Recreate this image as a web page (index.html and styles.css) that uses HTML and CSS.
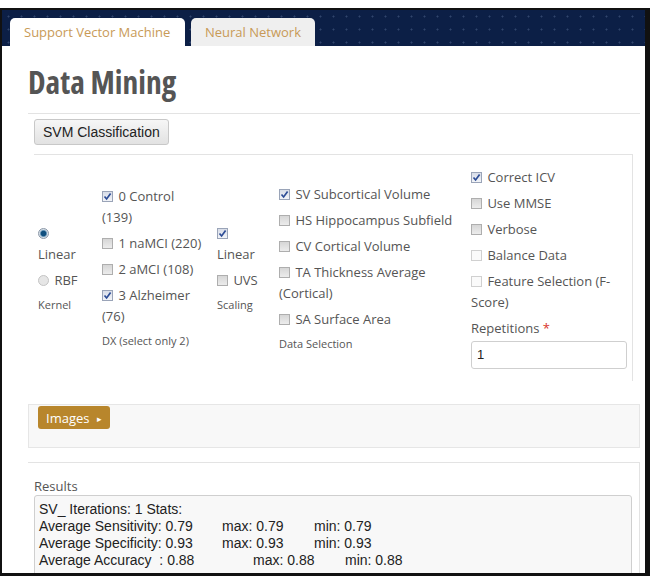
FILE: index.html
```html
<!DOCTYPE html>
<html lang="en">
<head>
    <meta charset="UTF-8">
    <title>Data Mining</title>
    <link rel="stylesheet" href="styles.css">
</head>
<body>
    <div class="frame">
        <div class="topbar">
            <div class="tab active">Support Vector Machine</div>
            <div class="tab">Neural Network</div>
        </div>

        <div class="content">
            <h1 class="title">Data Mining</h1>

            <div class="section">
                <button class="btn">SVM Classification</button>

                <div class="form-panel">
                    <div class="col col-kernel">
                        <div class="opt"><span class="radio on"></span> Linear</div>
                        <div class="opt"><span class="radio"></span> RBF</div>
                        <div class="caption">Kernel</div>
                    </div>

                    <div class="col col-dx">
                        <div class="opt"><span class="cb checked"><svg viewBox="0 0 11 11"><path d="M2.5 5.5 L4.6 8 L8.6 2.6"/></svg></span> 0 Control (139)</div>
                        <div class="opt"><span class="cb"></span> 1 naMCI (220)</div>
                        <div class="opt"><span class="cb"></span> 2 aMCI (108)</div>
                        <div class="opt"><span class="cb checked"><svg viewBox="0 0 11 11"><path d="M2.5 5.5 L4.6 8 L8.6 2.6"/></svg></span> 3 Alzheimer (76)</div>
                        <div class="caption">DX (select only 2)</div>
                    </div>

                    <div class="col col-scaling">
                        <div class="opt"><span class="cb checked"><svg viewBox="0 0 11 11"><path d="M2.5 5.5 L4.6 8 L8.6 2.6"/></svg></span> Linear</div>
                        <div class="opt"><span class="cb"></span> UVS</div>
                        <div class="caption">Scaling</div>
                    </div>

                    <div class="col col-data">
                        <div class="opt"><span class="cb checked"><svg viewBox="0 0 11 11"><path d="M2.5 5.5 L4.6 8 L8.6 2.6"/></svg></span> SV Subcortical Volume</div>
                        <div class="opt"><span class="cb"></span> HS Hippocampus Subfield</div>
                        <div class="opt"><span class="cb"></span> CV Cortical Volume</div>
                        <div class="opt"><span class="cb"></span> TA Thickness Average (Cortical)</div>
                        <div class="opt"><span class="cb"></span> SA Surface Area</div>
                        <div class="caption">Data Selection</div>
                    </div>

                    <div class="col col-options">
                        <div class="opt"><span class="cb checked"><svg viewBox="0 0 11 11"><path d="M2.5 5.5 L4.6 8 L8.6 2.6"/></svg></span> Correct ICV</div>
                        <div class="opt"><span class="cb"></span> Use MMSE</div>
                        <div class="opt"><span class="cb"></span> Verbose</div>
                        <div class="opt"><span class="cb light"></span> Balance Data</div>
                        <div class="opt"><span class="cb light"></span> Feature Selection (F-Score)</div>
                        <label class="field-label">Repetitions <span class="req">*</span></label>
                        <div class="input">1</div>
                    </div>
                </div>
            </div>

            <div class="images-box">
                <button class="images-btn">Images <span class="caret">&#9656;</span></button>
            </div>

            <div class="results">
                <div class="results-label">Results</div>
                <div class="results-text">
                    <div>SV_ Iterations: 1 Stats:</div>
                    <div><span class="c1">Average Sensitivity: 0.79</span><span class="c2">max: 0.79</span>min: 0.79</div>
                    <div><span class="c1">Average Specificity: 0.93</span><span class="c2">max: 0.93</span>min: 0.93</div>
                    <div><span class="c1 wide">Average Accuracy &nbsp;: 0.88</span><span class="c2">max: 0.88</span>min: 0.88</div>
                </div>
            </div>
        </div>
    </div>
</body>
</html>
```

FILE: styles.css
```css
body {
    margin: 0;
    background: #fff;
    font-family: "Open Sans", Arial, sans-serif;
    font-size: 13px;
    color: #555;
}
.frame {
    margin-top: 8px;
    height: 568px;
    box-sizing: border-box;
    border-style: solid;
    border-color: #111;
    border-width: 2px 5px 3px 2px;
    overflow: hidden;
    background: #fff;
}
.topbar {
    height: 36px;
    background-color: #0c1f46;
    background-image: radial-gradient(rgba(120, 140, 180, 0.35) 0.8px, transparent 1.2px);
    background-size: 13px 13px;
    display: flex;
    align-items: flex-end;
    gap: 6px;
    padding-left: 8px;
}
.tab {
    height: 28px;
    line-height: 28px;
    padding: 0 14px;
    border-radius: 5px 5px 0 0;
    background: #efefef;
    color: #c89a57;
    font-size: 13px;
}
.tab.active {
    width: 175px;
    box-sizing: border-box;
    background: #fff;
}
.content {
    padding: 0 5px 0 26px;
}
.title {
    margin: 0;
    padding: 18px 0 13px;
    font-size: 31.5px;
    line-height: 36px;
    font-weight: bold;
    font-stretch: 85%;
    color: #555;
}
.section {
    border-top: 1px solid #e3e3e3;
    padding: 5px 7px 0 6px;
}
.btn {
    font-family: "Liberation Sans", Arial, sans-serif;
    font-size: 14px;
    color: #222;
    height: 26px;
    padding: 0 8px;
    border: 1px solid #c8c8c8;
    border-radius: 3px;
    background: linear-gradient(#f6f6f6, #e2e2e2);
}
.form-panel {
    margin-top: 9px;
    border-top: 1px solid #e3e3e3;
    border-right: 1px solid #e3e3e3;
    padding: 12px 0 12px 4px;
    display: grid;
    grid-template-columns: 64px 115px 62px 192px 156px;
    align-items: center;
}
.col .opt {
    line-height: 21px;
    margin-bottom: 5px;
}
.caption {
    font-size: 11px;
    line-height: 18px;
    color: #555;
}
.col-kernel {
    width: 50px;
}
.col-dx {
    width: 100px;
}
.col-scaling {
    width: 50px;
}
.col-data {
    width: 180px;
}
.cb, .radio {
    display: inline-block;
    width: 11px;
    height: 11px;
    box-sizing: border-box;
    vertical-align: -1px;
    margin-right: 2px;
}
.cb {
    border: 1px solid #aeaeae;
    background: linear-gradient(#d6d6d6, #ececec);
    position: relative;
}
.cb.checked {
    border-color: #9aa4b8;
    background: linear-gradient(#d8dde8, #f2f4f8);
}
.cb.light {
    border-color: #d0d0d0;
    background: #fafafa;
}
.cb svg {
    position: absolute;
    left: -1px;
    top: -1px;
    width: 11px;
    height: 11px;
    fill: none;
    stroke: #2c4c96;
    stroke-width: 1.7;
}
.radio {
    border-radius: 50%;
    border: 1px solid #c4c4c4;
    background: #e6e6e6;
}
.radio.on {
    border-color: #8b98a8;
    background: radial-gradient(circle, #0f4f7e 0 2.4px, #5d8fb2 3px, #d3dde6 4px);
}
.field-label {
    display: block;
    line-height: 21px;
    margin-top: 2px;
}
.req {
    color: #d9342b;
}
.input {
    margin-top: 2px;
    height: 28px;
    line-height: 26px;
    box-sizing: border-box;
    border: 1px solid #cfcfcf;
    border-radius: 3px;
    padding-left: 5px;
    font-family: "Liberation Sans", Arial, sans-serif;
    font-size: 13px;
    color: #222;
}
.images-box {
    margin-top: 23px;
    height: 44px;
    box-sizing: border-box;
    border: 1px solid #e6e6e6;
    background: #f8f8f8;
    padding: 1px 9px;
}
.images-btn {
    height: 23px;
    padding: 0 8px;
    border: none;
    border-radius: 3px;
    background: #b8862c;
    color: #fff;
    font-family: "Open Sans", Arial, sans-serif;
    font-size: 13px;
}
.caret {
    font-size: 9px;
    margin-left: 4px;
    vertical-align: 1px;
}
.results {
    margin-top: 14px;
    border-top: 1px solid #e3e3e3;
    border-right: 1px solid #e3e3e3;
    padding: 14px 7px 0 6px;
}
.results-label {
    line-height: 18px;
}
.results-text {
    border: 1px solid #cfcfcf;
    border-radius: 3px;
    background: #f8f8f8;
    padding: 5px 4px 10px;
    font-family: "Liberation Sans", Arial, sans-serif;
    font-size: 14px;
    line-height: 17px;
    color: #222;
}
.c1 {
    display: inline-block;
    width: 183px;
}
.c1.wide {
    width: 214px;
}
.c2 {
    display: inline-block;
    width: 92px;
}
```
